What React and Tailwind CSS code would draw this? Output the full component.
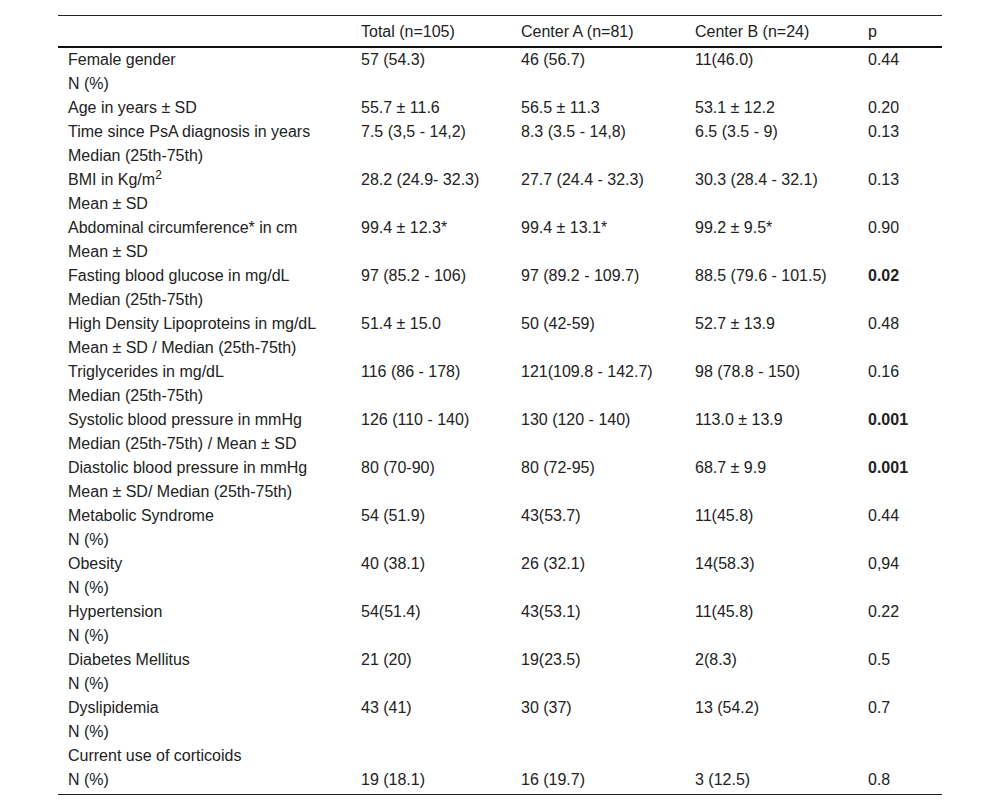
import React from 'react';

// Baseline characteristics by center
const rows = [
  { label: ['Female gender', 'N (%)'], values: ['57 (54.3)', '46 (56.7)', '11(46.0)', '0.44'] },
  { label: ['Age in years ± SD'], values: ['55.7 ± 11.6', '56.5 ± 11.3', '53.1 ± 12.2', '0.20'] },
  {
    label: ['Time since PsA diagnosis in years', 'Median (25th-75th)'],
    values: ['7.5 (3,5 - 14,2)', '8.3 (3.5 - 14,8)', '6.5 (3.5 - 9)', '0.13'],
  },
  {
    label: [
      <>
        BMI in Kg/m<sup>2</sup>
      </>,
      'Mean ± SD',
    ],
    values: ['28.2 (24.9- 32.3)', '27.7 (24.4 - 32.3)', '30.3 (28.4 - 32.1)', '0.13'],
  },
  {
    label: ['Abdominal circumference* in cm', 'Mean ± SD'],
    values: ['99.4 ± 12.3*', '99.4 ± 13.1*', '99.2 ± 9.5*', '0.90'],
  },
  {
    label: ['Fasting blood glucose in mg/dL', 'Median (25th-75th)'],
    values: ['97 (85.2 - 106)', '97 (89.2 - 109.7)', '88.5 (79.6 - 101.5)', '0.02'],
    bold: true,
  },
  {
    label: ['High Density Lipoproteins in mg/dL', 'Mean ± SD / Median (25th-75th)'],
    values: ['51.4 ± 15.0', '50 (42-59)', '52.7 ± 13.9', '0.48'],
  },
  {
    label: ['Triglycerides in mg/dL', 'Median (25th-75th)'],
    values: ['116 (86 - 178)', '121(109.8 - 142.7)', '98 (78.8 - 150)', '0.16'],
  },
  {
    label: ['Systolic blood pressure in mmHg', 'Median (25th-75th) / Mean ± SD'],
    values: ['126 (110 - 140)', '130 (120 - 140)', '113.0 ± 13.9', '0.001'],
    bold: true,
  },
  {
    label: ['Diastolic blood pressure in mmHg', 'Mean ± SD/ Median (25th-75th)'],
    values: ['80 (70-90)', '80 (72-95)', '68.7 ± 9.9', '0.001'],
    bold: true,
  },
  { label: ['Metabolic Syndrome', 'N (%)'], values: ['54 (51.9)', '43(53.7)', '11(45.8)', '0.44'] },
  { label: ['Obesity', 'N (%)'], values: ['40 (38.1)', '26 (32.1)', '14(58.3)', '0,94'] },
  { label: ['Hypertension', 'N (%)'], values: ['54(51.4)', '43(53.1)', '11(45.8)', '0.22'] },
  { label: ['Diabetes Mellitus', 'N (%)'], values: ['21 (20)', '19(23.5)', '2(8.3)', '0.5'] },
  { label: ['Dyslipidemia', 'N (%)'], values: ['43 (41)', '30 (37)', '13 (54.2)', '0.7'] },
  {
    label: ['Current use of corticoids', 'N (%)'],
    values: ['19 (18.1)', '16 (19.7)', '3 (12.5)', '0.8'],
    bottom: true,
  },
];

const headers = ['', 'Total (n=105)', 'Center A (n=81)', 'Center B (n=24)', 'p'];

const App = () => {
  return (
    <div className="min-h-screen bg-white pt-[15px] font-['Liberation_Sans',Arial,sans-serif] text-[16px] leading-[24px] text-[#222]">
      <table className="mx-auto w-[884px] table-fixed border-collapse">
        <colgroup>
          <col className="w-[293px]" />
          <col className="w-[160px]" />
          <col className="w-[174px]" />
          <col className="w-[173px]" />
          <col className="w-[84px]" />
        </colgroup>
        <thead>
          <tr className="border-t border-b-2 border-t-[#222] border-b-[#111]">
            {headers.map((h, i) => (
              <th key={i} className="pl-[10px] pr-1 pt-[4px] pb-[2px] text-left align-top font-normal">
                {h}
              </th>
            ))}
          </tr>
        </thead>
        <tbody className="border-b border-[#222]">
          {rows.map((row, i) => (
            <tr key={i}>
              <td className={`pl-[10px] pr-1 align-top ${row.bottom ? 'pb-[2px]' : ''}`}>
                {row.label.map((line, j) => (
                  <div key={j}>{line}</div>
                ))}
              </td>
              {row.values.map((v, j) => (
                <td
                  key={j}
                  className={`pl-[10px] pr-1 ${row.bottom ? 'pb-[2px] align-bottom' : 'align-top'} ${
                    row.bold && j === 3 ? 'font-bold' : ''
                  }`}
                >
                  {v}
                </td>
              ))}
            </tr>
          ))}
        </tbody>
      </table>
    </div>
  );
};

export default App;
